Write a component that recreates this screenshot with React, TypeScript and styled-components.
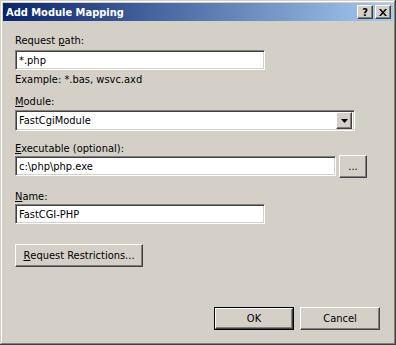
import React from "react";
import styled, { createGlobalStyle } from "styled-components";

const GlobalStyle = createGlobalStyle`
  body {
    margin: 0;
    background: #d4d0c8;
  }
`;

const App = () => {
  return (
    <>
      <GlobalStyle />
      <Window>
        <TitleBar>
          <Title>Add Module Mapping</Title>
          <CaptionButton>?</CaptionButton>
          <CaptionButton>
            <svg width="8" height="7" viewBox="0 0 8 7">
              <path d="M0 0h2l2 2.5L6 0h2L5 3.5 8 7H6L4 4.5 2 7H0l3-3.5z" fill="#000" />
            </svg>
          </CaptionButton>
        </TitleBar>
        <Body>
          <Label top={13}>
            Request <u>p</u>ath:
          </Label>
          <TextBox width={250} top={3}>*.php</TextBox>
          <Label top={3}>Example: *.bas, wsvc.axd</Label>
          <Label top={9}>
            <u>M</u>odule:
          </Label>
          <Combo>
            <ComboText>FastCgiModule</ComboText>
            <DropButton>
              <svg width="7" height="4" viewBox="0 0 7 4">
                <path d="M0 0h7L3.5 4z" fill="#000" />
              </svg>
            </DropButton>
          </Combo>
          <Label top={11}>
            <u>E</u>xecutable (optional):
          </Label>
          <BrowseRow>
            <TextBox width={321} top={1}>c:\php\php.exe</TextBox>
            <Button width={28} height={23}>...</Button>
          </BrowseRow>
          <Label top={12}>
            <u>N</u>ame:
          </Label>
          <TextBox width={250} top={1}>FastCGI-PHP</TextBox>
          <RestrictionsRow>
            <Button width={128} height={23}>
              <u>R</u>equest Restrictions...
            </Button>
          </RestrictionsRow>
          <Footer>
            <DefaultButton>
              <Button width={78} height={21}>OK</Button>
            </DefaultButton>
            <Button width={80} height={23}>Cancel</Button>
          </Footer>
        </Body>
      </Window>
    </>
  );
};

export default App;

const raised = `
  border: 1px solid;
  border-color: #ffffff #404040 #404040 #ffffff;
  box-shadow: inset -1px -1px #808080, inset 1px 1px #d4d0c8;
  background: #d4d0c8;
`;

const sunken = `
  border: 1px solid;
  border-color: #808080 #ffffff #ffffff #808080;
  box-shadow: inset 1px 1px #404040, inset -1px -1px #d4d0c8;
  background: #ffffff;
`;

const Window = styled.div`
  width: 396px;
  height: 345px;
  box-sizing: border-box;
  padding: 3px;
  background: #d4d0c8;
  box-shadow: inset -1px -1px #404040, inset 1px 1px #d4d0c8,
    inset -2px -2px #808080, inset 2px 2px #ffffff;
  display: flex;
  flex-direction: column;
  font-family: "DejaVu Sans Condensed", "DejaVu Sans", sans-serif;
  font-stretch: condensed;
  font-size: 11px;
  color: #000000;
`;

const TitleBar = styled.div`
  height: 18px;
  display: flex;
  align-items: center;
  gap: 2px;
  padding: 0 2px 0 3px;
  background: linear-gradient(to right, #0a246a, #a6caf0);
`;

const Title = styled.div`
  flex: 1;
  color: #ffffff;
  font-weight: bold;
  font-size: 11px;
`;

const CaptionButton = styled.div`
  ${raised}
  width: 16px;
  height: 14px;
  box-sizing: border-box;
  display: flex;
  align-items: center;
  justify-content: center;
  font-weight: bold;
  font-size: 11px;
  line-height: 1;
`;

const Body = styled.div`
  flex: 1;
  display: flex;
  flex-direction: column;
  align-items: flex-start;
  padding: 0 13px 12px 12px;
`;

const Label = styled.div<{ top: number }>`
  height: 13px;
  line-height: 13px;
  margin-top: ${(p) => p.top}px;
  white-space: nowrap;
`;

const TextBox = styled.div<{ width: number; top: number }>`
  ${sunken}
  width: ${(p) => p.width}px;
  height: 20px;
  margin-top: ${(p) => p.top}px;
  box-sizing: border-box;
  padding: 0 3px;
  display: flex;
  align-items: center;
  white-space: nowrap;
`;

const Combo = styled.div`
  ${sunken}
  width: 340px;
  height: 21px;
  margin-top: 2px;
  box-sizing: border-box;
  padding: 2px;
  display: flex;
  align-items: center;
`;

const ComboText = styled.div`
  flex: 1;
  padding-left: 1px;
`;

const DropButton = styled.div`
  ${raised}
  width: 16px;
  height: 17px;
  box-sizing: border-box;
  display: flex;
  align-items: center;
  justify-content: center;
`;

const BrowseRow = styled.div`
  display: flex;
  align-items: flex-start;
  gap: 3px;
`;

const Button = styled.div<{ width: number; height: number }>`
  ${raised}
  width: ${(p) => p.width}px;
  height: ${(p) => p.height}px;
  box-sizing: border-box;
  display: flex;
  align-items: center;
  justify-content: center;
  white-space: nowrap;
`;

const RestrictionsRow = styled.div`
  margin-top: 20px;
`;

const Footer = styled.div`
  margin-top: auto;
  align-self: flex-end;
  display: flex;
  gap: 6px;
`;

const DefaultButton = styled.div`
  border: 1px solid #000000;
`;
